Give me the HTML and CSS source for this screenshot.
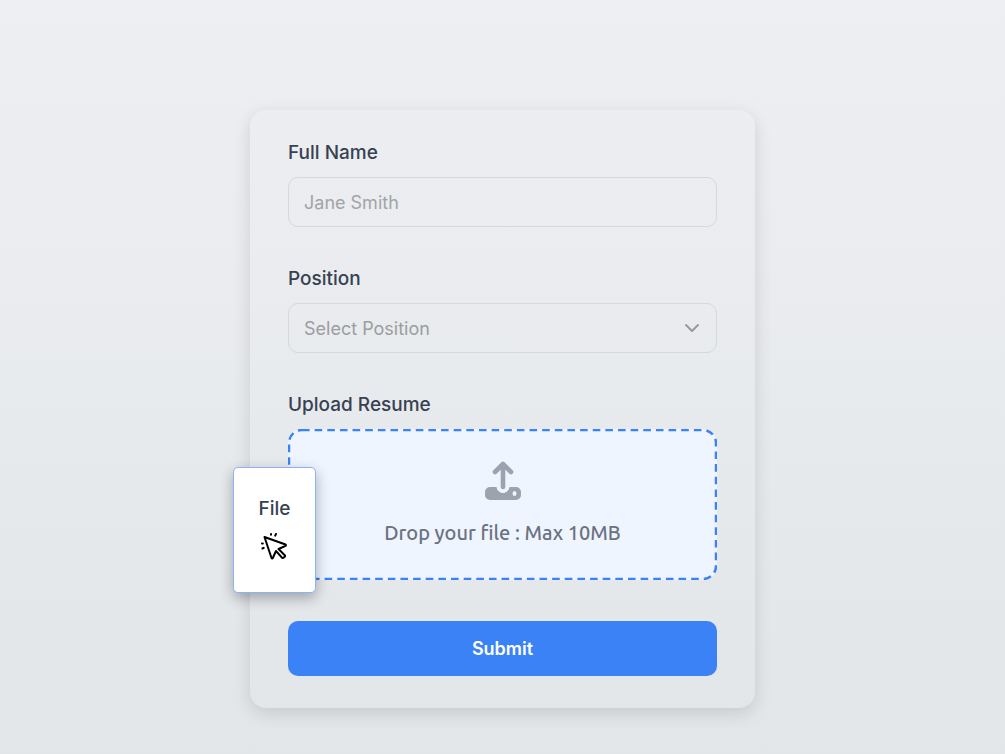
FILE: index.html
```
<!doctype html>
<html lang="en">
    <head>
        <meta charset="utf-8">
        <meta name="viewport" content="width=device-width, initial-scale=1">
        <title>Apply</title>
        <link rel="stylesheet" href="styles.css">
    </head>
    <body>
        <form class="card">
            <div class="field">
                <label class="field-label" for="name">Full Name</label>
                <input class="control" type="text" id="name" placeholder="Jane Smith">
            </div>

            <div class="field">
                <label class="field-label" for="position">Position</label>
                <div class="select-wrap">
                    <select class="control" id="position">
                        <option value="">Select Position</option>
                    </select>
                    <svg class="chevron" viewBox="0 0 16 16" fill="none" stroke="currentColor" stroke-width="2" stroke-linecap="round" stroke-linejoin="round">
                        <path d="M2 5l6 6 6-6"/>
                    </svg>
                </div>
            </div>

            <div class="field">
                <label class="field-label" for="resume">Upload Resume</label>
                <div class="drop">
                    <svg class="drop-outline"><rect rx="13"/></svg>
                    <label class="drop-area" for="resume">
                        <svg class="upload-icon" viewBox="0 0 36 40">
                            <path d="M18 26V4M10 11l8-8 8 8" fill="none" stroke="currentColor" stroke-width="4.6" stroke-linecap="round" stroke-linejoin="round"/>
                            <path fill="currentColor" fill-rule="evenodd" d="M5 26h6.500c.6 3.600 3.300 6 6.500 6s5.900-2.400 6.500-6H31a5 5 0 0 1 5 5v3a5 5 0 0 1-5 5H5a5 5 0 0 1-5-5v-3a5 5 0 0 1 5-5zM29.500 30a2 2.500 0 1 0 0 5 2 2.500 0 1 0 0-5z"/>
                        </svg>
                        <span>Drop your file : Max 10MB</span>
                    </label>
                    <input class="file-input" type="file" id="resume">

                    <!-- file being dragged in -->
                    <div class="file-card">
                        <span>File</span>
                        <svg class="cursor-icon" viewBox="1.5 1 28 28" fill="none" stroke="currentColor" stroke-width="2" stroke-linecap="round" stroke-linejoin="round">
                            <path d="M5 5l21 7.500c.6.300.6 1 0 1.300L19 17l6.500 6.500c.8.800-2 3.200-2.800 2.300L16.500 19l-3.200 7c-.3.600-1 .6-1.300 0z"/>
                            <path d="M11.500 2v.8M16.500 2l-.8 1.600M2.500 11.500h.8M3 16.500l1.200-.6"/>
                        </svg>
                    </div>
                </div>
            </div>

            <button class="submit" type="submit">Submit</button>
        </form>
    </body>
</html>
```
FILE: styles.css
```
* {
    box-sizing: border-box;
}

body {
    margin: 0;
    min-height: 100vh;
    padding: 110px 20px 40px;
    display: flex;
    justify-content: center;
    align-items: flex-start;
    font-family: Inter, Arial, sans-serif;
    font-size: 18px;
    color: #374151;
    background: linear-gradient(#eeeff3, #e2e6e8);
}

.card {
    width: 100%;
    max-width: 505px;
    padding: 32px 38px;
    display: flex;
    flex-direction: column;
    gap: 41px;
    border-radius: 16px;
    box-shadow: 0 5px 18px rgba(0, 0, 0, 0.13);
}

.field {
    display: flex;
    flex-direction: column;
    gap: 13px;
}

.field-label {
    font-size: 19px;
    font-weight: 500;
    line-height: 22px;
}

.control {
    width: 100%;
    height: 50px;
    padding: 0 15px;
    border: 1px solid #d5d8dc;
    border-radius: 10px;
    background: transparent;
    font-family: inherit;
    font-size: 18px;
    color: #9b9d9f;
    appearance: none;
}

.control::placeholder {
    color: #a3a4a6;
    opacity: 1;
}

.select-wrap {
    position: relative;
}

.select-wrap .control {
    display: block;
}

.chevron {
    position: absolute;
    right: 17px;
    top: 17px;
    width: 16px;
    height: 16px;
    color: #98999b;
    pointer-events: none;
}

/* Drop zone */
.drop {
    position: relative;
    height: 151px;
    border-radius: 14px;
    background: #eef5ff;
}

.drop-outline {
    position: absolute;
    inset: 0;
    width: 100%;
    height: 100%;
    pointer-events: none;
}

.drop-outline rect {
    x: 1px;
    y: 1px;
    width: calc(100% - 2px);
    height: calc(100% - 2px);
    fill: none;
    stroke: #3b82f6;
    stroke-width: 2.5px;
    stroke-dasharray: 7.6 5.04;
}

.drop-area {
    height: 100%;
    padding-bottom: 2px;
    display: flex;
    flex-direction: column;
    align-items: center;
    justify-content: center;
    gap: 18px;
    font-family: Ubuntu, "Noto Sans", sans-serif;
    font-size: 20px;
    font-weight: 500;
    line-height: 28px;
    color: #6b7280;
    cursor: pointer;
}

.upload-icon {
    width: 36px;
    height: 40px;
    color: #9ca3af;
}

.file-input {
    position: absolute;
    width: 1px;
    height: 1px;
    opacity: 0;
}

.file-card {
    position: absolute;
    left: -55px;
    top: 38px;
    width: 83px;
    height: 126px;
    display: flex;
    flex-direction: column;
    align-items: center;
    justify-content: center;
    gap: 14px;
    border: 1px solid #8ab4fa;
    border-radius: 5px;
    background: #fff;
    box-shadow: 0 5px 14px rgba(0, 0, 0, 0.3);
    font-size: 19px;
    font-weight: 500;
    line-height: 20px;
    cursor: grab;
}

.cursor-icon {
    width: 28px;
    height: 28px;
    color: #000;
}

.submit {
    height: 55px;
    border: none;
    border-radius: 10px;
    background: #3b82f6;
    font-family: inherit;
    font-size: 18px;
    font-weight: 600;
    color: #fff;
    cursor: pointer;
}
```
